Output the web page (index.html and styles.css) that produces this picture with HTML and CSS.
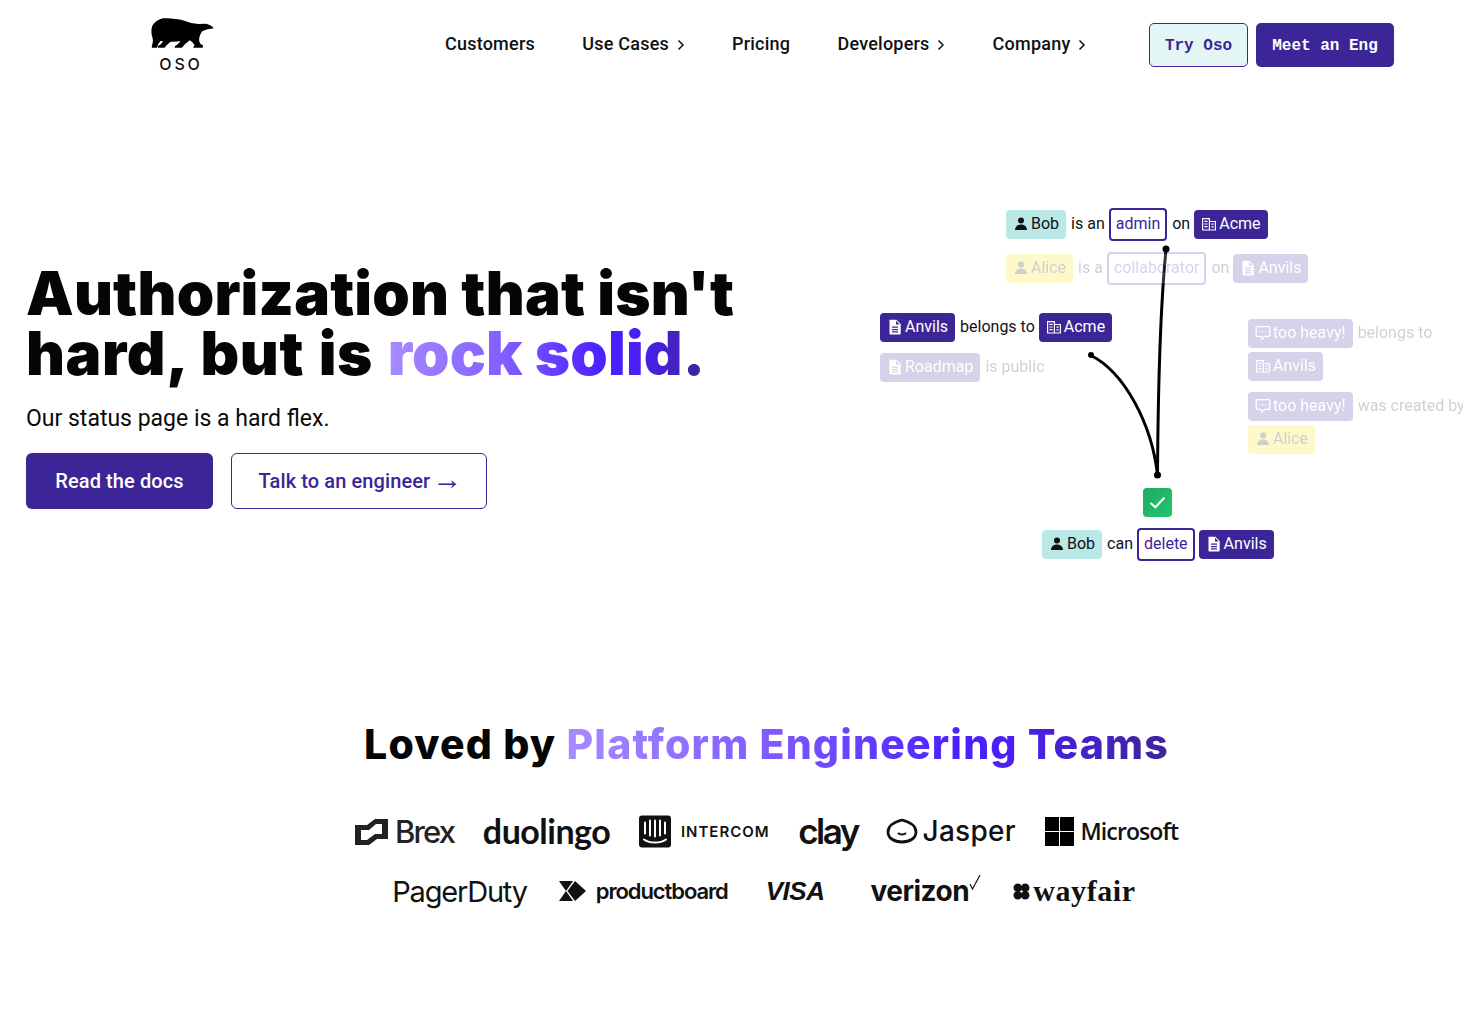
FILE: index.html
```html
<!DOCTYPE html>
<html lang="en">
<head>
<meta charset="utf-8">
<title>Oso</title>
<link rel="stylesheet" href="styles.css">
</head>
<body>
<svg class="defs" width="0" height="0" aria-hidden="true">
  <symbol id="i-user" viewBox="0 0 16 16"><circle cx="8" cy="4.600" r="3"/><path d="M2 14c0-3.400 2.600-5.500 6-5.500s6 2.100 6 5.500z"/></symbol>
  <symbol id="i-doc" viewBox="0 0 16 16"><path fill-rule="evenodd" d="M2.500 0.800h7l4.200 4.200v9.700a.8.8 0 0 1-.8.8H3.300a.8.8 0 0 1-.8-.8zM9 1.800v3.700h3.700zM5 7.500v1.200h6V7.500zM5 10v1.200h6V10zM5 12.300v1.200h6v-1.200z"/></symbol>
  <symbol id="i-org" viewBox="0 0 16 16"><g fill="none" stroke="currentColor" stroke-width="1.200"><path d="M1.600 14V2.600h6.800V14zM8.400 5.500h6V14h-6zM3.400 5.400h3.200M3.400 8h3.200M3.400 10.600h3.200M10.400 8.200h2.200M10.400 10.800h2.200"/></g></symbol>
  <symbol id="i-chat" viewBox="0 0 16 16"><path fill="none" stroke="currentColor" stroke-width="1.300" d="M2.500 1.700h11a1.300 1.300 0 0 1 1.300 1.300v7a1.300 1.300 0 0 1-1.300 1.300H9.500L7 14.300l-1-3H2.500A1.300 1.300 0 0 1 1.200 10V3a1.300 1.300 0 0 1 1.300-1.300z"/><path d="M4.500 6h1.300v1.300H4.500zM7.400 6h1.300v1.300H7.400zM10.200 6h1.300v1.300h-1.300z"/></symbol>
  <symbol id="i-chev" viewBox="0 0 8 12"><path fill="none" stroke="currentColor" stroke-width="1.500" d="M1.500 1.500 6 6l-4.500 4.500"/></symbol>
</svg>

<header class="topbar">
  <a class="brand" href="#">
    <svg class="bear" viewBox="10 13 188 90"><path d="M198 44Q192 35 176 30L152 31Q125 28 100 18 70 12 45 14 22 20 13 38 8 55 14 72 17 85 12 97L12 102 27 102Q30 90 38 82L45 82Q42 92 30 97L30 102 50 102Q58 92 68 84 85 85 98 82 92 92 82 97L80 102 102 102Q112 90 126 80 136 86 140 94L136 102 165 102 165 95Q156 92 154 82 153 65 164 52 178 46 198 44Z"/></svg>
    <span class="brand-name">OSO</span>
  </a>
  <nav class="nav">
    <a class="nav-link" href="#">Customers</a>
    <a class="nav-link" href="#">Use Cases <svg class="chev"><use href="#i-chev"/></svg></a>
    <a class="nav-link" href="#">Pricing</a>
    <a class="nav-link" href="#">Developers <svg class="chev"><use href="#i-chev"/></svg></a>
    <a class="nav-link" href="#">Company <svg class="chev"><use href="#i-chev"/></svg></a>
  </nav>
  <div class="cta">
    <a class="cta-btn cta-light" href="#">Try Oso</a>
    <a class="cta-btn cta-dark" href="#">Meet an Eng</a>
  </div>
</header>

<main>
  <section class="hero">
    <div class="hero-copy">
      <h1 class="hero-title">Authorization that isn't<br><span class="title-line">hard, but is <span class="grad-rock">rock solid.</span></span></h1>
      <p class="hero-sub">Our status page is a hard flex.</p>
      <div class="hero-actions">
        <a class="btn btn-solid" href="#">Read the docs</a>
        <a class="btn btn-outline" href="#">Talk to an engineer <span class="arrow">→</span></a>
      </div>
    </div>
    <div class="diagram">
      <svg class="wires" viewBox="0 0 583 370" fill="none">
        <path class="wire" d="M286 50C280 110 278 200 277.500 275"/>
        <path class="wire" d="M210 155C245 172 272 225 277.500 275"/>
        <circle class="dot" cx="286" cy="49" r="3.500"/>
        <circle class="dot" cx="211" cy="155" r="3"/>
        <circle class="dot" cx="277.500" cy="275" r="3.500"/>
      </svg>

      <div class="group g-a">
        <div class="row"><span class="chip chip-cyan"><svg class="ico"><use href="#i-user"/></svg>Bob</span><span class="word">is an</span><span class="chip chip-line">admin</span><span class="word">on</span><span class="chip chip-dark"><svg class="ico"><use href="#i-org"/></svg>Acme</span></div>
        <div class="row faded"><span class="chip chip-yellow"><svg class="ico"><use href="#i-user"/></svg>Alice</span><span class="word">is a</span><span class="chip chip-line">collaborator</span><span class="word">on</span><span class="chip chip-dark"><svg class="ico"><use href="#i-doc"/></svg>Anvils</span></div>
      </div>

      <div class="group g-b">
        <div class="row"><span class="chip chip-dark"><svg class="ico"><use href="#i-doc"/></svg>Anvils</span><span class="word">belongs to</span><span class="chip chip-dark"><svg class="ico"><use href="#i-org"/></svg>Acme</span></div>
        <div class="row faded"><span class="chip chip-dark"><svg class="ico"><use href="#i-doc"/></svg>Roadmap</span><span class="word">is public</span></div>
      </div>

      <div class="group g-c faded">
        <div class="row"><span class="chip chip-dark"><svg class="ico"><use href="#i-chat"/></svg>too heavy!</span><span class="word">belongs to</span></div>
        <div class="row"><span class="chip chip-dark"><svg class="ico"><use href="#i-org"/></svg>Anvils</span></div>
      </div>
      <div class="group g-d faded">
        <div class="row"><span class="chip chip-dark"><svg class="ico"><use href="#i-chat"/></svg>too heavy!</span><span class="word">was created by</span></div>
        <div class="row"><span class="chip chip-yellow"><svg class="ico"><use href="#i-user"/></svg>Alice</span></div>
      </div>

      <div class="check"><svg viewBox="0 0 16 16" fill="none"><path d="M1.500 8.500 6 12.500 14.500 3.500" stroke="#fff" stroke-width="2"/></svg></div>

      <div class="group g-e">
        <div class="row"><span class="chip chip-cyan"><svg class="ico"><use href="#i-user"/></svg>Bob</span><span class="word">can</span><span class="chip chip-line">delete</span><span class="chip chip-dark"><svg class="ico"><use href="#i-doc"/></svg>Anvils</span></div>
      </div>
    </div>
  </section>

  <section class="loved">
    <h2 class="loved-title">Loved by <span class="grad-teams">Platform Engineering Teams</span></h2>
    <div class="logos logos-1">
      <div class="logo l-brex"><svg class="lg-brex" viewBox="0 0 33 27"><path fill-rule="evenodd" d="M0 7H12L20 1H33V21H22L14 27H0zM6 12V22H12L20 16H27V6H21L14 12z"/></svg><span>Brex</span></div>
      <div class="logo l-duo">duolingo</div>
      <div class="logo l-intercom"><svg class="lg-intercom" viewBox="0 0 32 32"><rect width="32" height="32" rx="3"/><path fill="none" stroke="#fff" stroke-width="2" stroke-linecap="round" d="M6 7v11M11 5v15M16 5v16M21 5v15M26 7v11M5 24c6 4 16 4 22 0"/></svg><span>INTERCOM</span></div>
      <div class="logo l-clay">clay</div>
      <div class="logo l-jasper"><svg class="lg-jasper" viewBox="0 0 32 26" fill="none"><path stroke="#111" stroke-width="2.800" d="M16 2C8 4 2 7 2 14c0 6 6 10 14 10s14-4 14-10C30 7 24 4 16 2z"/><path stroke="#111" stroke-width="2" d="M12 15c2 2 6 2 8 0"/></svg><span>Jasper</span></div>
      <div class="logo l-ms"><span class="ms-grid"><i></i><i></i><i></i><i></i></span><span>Microsoft</span></div>
    </div>
    <div class="logos logos-2">
      <div class="logo l-pd">PagerDuty</div>
      <div class="logo l-pb"><svg class="lg-pb" viewBox="0 0 28 20"><path d="M0 0h14l-7 10zM0 20h14L7 10z"/><path d="M8.500 10 16 0l11 10-11 10z"/></svg><span>productboard</span></div>
      <div class="logo l-visa">VISA</div>
      <div class="logo l-vz">verizon<svg class="lg-check" viewBox="0 0 12 16" fill="none"><path stroke="#111" stroke-width="1.200" d="M1 10l2.500 5L11 1"/></svg></div>
      <div class="logo l-wf"><svg class="lg-wf" viewBox="0 0 16 16"><circle cx="4.500" cy="4.500" r="4"/><circle cx="11.500" cy="4.500" r="4"/><circle cx="4.500" cy="11.500" r="4"/><circle cx="11.500" cy="11.500" r="4"/></svg><span>wayfair</span></div>
    </div>
  </section>
</main>
</body>
</html>
```
FILE: styles.css
```css
* { box-sizing: border-box; }
html, body { margin: 0; padding: 0; }
body { width: 1463px; height: 1029px; overflow: hidden; background: #fff; color: #000; font-family: Roboto, "Liberation Sans", sans-serif; }
a { text-decoration: none; color: inherit; }
.defs { position: absolute; }

.topbar { display: flex; align-items: center; height: 90px; padding: 0 69px 0 151px; }
.brand { display: flex; flex-direction: column; align-items: center; width: 63px; margin-right: 231px; }
.bear { width: 63px; height: 30px; fill: #000; display: block; margin-top: -1px; }
.brand-name { font: 500 16px/1 Inter, sans-serif; letter-spacing: 2.800px; margin-top: 8px; margin-right: 3px; color: #111; }
.nav { display: flex; gap: 47.300px; flex: 1; }
.nav-link { display: flex; align-items: center; font: 500 18px/24px Roboto, sans-serif; letter-spacing: 0.220px; color: #111; white-space: pre; padding-bottom: 2px; }
.chev { width: 8px; height: 12px; margin-left: 3px; margin-top: 2px; }
.cta { display: flex; gap: 8px; }
.cta-btn { display: flex; align-items: center; justify-content: center; height: 44px; border-radius: 5px; font: 700 16px/1 "Liberation Mono", monospace; padding-top: 1px; }
.cta-light { width: 99px; background: #e3f6f5; border: 1px solid #3c2597; color: #3c2597; }
.cta-dark { width: 138px; background: #3c2597; color: #fff; }

.hero { display: flex; height: 540px; }
.hero-copy { width: 854px; padding: 173px 0 0 26px; }
.hero-title { margin: 0; font: 900 60px/60px Inter, sans-serif; letter-spacing: 0.200px; white-space: nowrap; color: #050505; }
.title-line { letter-spacing: 0.650px; word-spacing: 2px; }
.grad-rock { background: linear-gradient(90deg, #a78bff 0%, #8560ff 35%, #4a20ff 68%, #4a20f0 80%, #3c2597 100%); -webkit-background-clip: text; background-clip: text; color: transparent; letter-spacing: 0.200px; word-spacing: 0; }
.hero-sub { margin: 18px 0 0; font: 400 23px/36px Roboto, sans-serif; color: #0a0a0a; }
.hero-actions { display: flex; gap: 18px; margin-top: 16px; }
.btn { display: flex; align-items: center; justify-content: center; height: 56px; border-radius: 6px; font: 500 20px/1 Roboto, sans-serif; letter-spacing: 0.100px; white-space: pre; }
.btn-solid { width: 187px; background: #3c2597; color: #fff; }
.btn-outline { width: 256px; border: 1px solid #3c2597; color: #3c2597; }
.arrow { font: 400 30px/20px "Liberation Sans", sans-serif; margin: 0 -3px 4px -3px; }

.diagram { position: relative; flex: 1; margin-left: 26px; margin-top: 110px; height: 370px; overflow: hidden; }
.wires { position: absolute; left: 0; top: 0; width: 583px; height: 370px; }
.wire { stroke: #000; stroke-width: 3px; }
.dot { fill: #000; }

.group { position: absolute; display: flex; flex-direction: column; }
.g-a { left: 126px; top: 8px; gap: 11px; }
.g-b { left: 0; top: 113px; gap: 11px; }
.g-c { left: 368px; top: 119px; gap: 4px; }
.g-d { left: 368px; top: 192px; gap: 4px; }
.g-e { left: 162px; top: 328px; }
.row { display: flex; align-items: center; gap: 4px; height: 33px; white-space: nowrap; }
.g-b .row, .g-c .row, .g-d .row { height: 29px; }
.faded { opacity: 0.2; }
.chip { display: inline-flex; align-items: center; height: 29px; padding: 0 7px 2px; border-radius: 4px; font: 400 16px/1 Roboto, sans-serif; }
.chip-cyan { background: #b9e8e7; color: #111; }
.chip-yellow { background: #ffdd00; color: #111; }
.chip-dark { background: #3c2597; color: #fff; }
.chip-line { height: 33px; padding: 0 5px 2px; background: #fff; border: 2px solid #3c2597; color: #3c2597; }
.word { font: 400 16px/1 Roboto, sans-serif; color: #111; padding-bottom: 2px; margin-left: 1px; }
.ico { width: 16px; height: 16px; margin-right: 2px; fill: currentColor; color: inherit; }
.check { position: absolute; left: 263px; top: 288px; width: 29px; height: 29px; border-radius: 4px; background: linear-gradient(135deg, #1fa865, #22c76d); display: flex; align-items: center; justify-content: center; }
.check svg { width: 17px; height: 17px; }

.loved { display: flex; flex-direction: column; align-items: center; padding: 84px 0 0 70px; }
.loved-title { margin: 0; font: 800 41px/60px Inter, sans-serif; letter-spacing: 1.170px; color: #050505; white-space: nowrap; }
.grad-teams { background: linear-gradient(90deg, #a78bff 0%, #8560ff 30%, #4a20ff 66%, #4a20f0 75%, #3c2597 100%); -webkit-background-clip: text; background-clip: text; color: transparent; }
.logos { display: flex; align-items: center; justify-content: center; color: #111; white-space: nowrap; }
.logos-1 { gap: 28.600px; margin-top: 27px; height: 60px; }
.logos-2 { gap: 32px; height: 60px; margin-right: 5px; }
.logo { display: flex; align-items: center; }

.lg-brex { width: 33px; height: 27px; margin-right: 7px; fill: #222; }
.l-brex span { font: 500 31px/1 Inter, sans-serif; letter-spacing: -1.800px; color: #222; }
.l-duo { font: 700 34px/1 Lato, sans-serif; letter-spacing: -0.500px; }
.lg-intercom { width: 32px; height: 33px; margin-right: 10px; fill: #111; }
.l-intercom span { font: 600 15px/1 Inter, sans-serif; letter-spacing: 1px; }
.l-clay { font: 600 35px/1 Inter, sans-serif; letter-spacing: -2.500px; }
.lg-jasper { width: 32px; height: 26px; margin-right: 4px; }
.l-jasper span { font: 500 28px/1 Inter, sans-serif; letter-spacing: 0.300px; }
.ms-grid { display: grid; grid-template-columns: 14px 14px; grid-auto-rows: 14px; gap: 1px; margin-right: 7px; }
.ms-grid i { background: #000; }
.l-ms span { font: 600 23px/1 "Open Sans", sans-serif; letter-spacing: -0.900px; }
.l-pd { font: 400 29px/1 Inter, sans-serif; letter-spacing: -1.200px; }
.lg-pb { width: 28px; height: 20px; margin-right: 9px; fill: #111; }
.l-pb span { font: 600 22px/1 Inter, sans-serif; letter-spacing: -1.100px; }
.l-visa { font: italic 700 26px/1 "Liberation Sans", sans-serif; letter-spacing: -0.500px; margin: 0 14px 0 6px; }
.l-vz { font: 700 28px/1 Inter, sans-serif; letter-spacing: -0.500px; }
.lg-check { width: 12px; height: 16px; margin-top: -18px; }
.lg-wf { width: 17px; height: 17px; margin-right: 3px; fill: #111; }
.l-wf span { font: 700 30px/1 "Liberation Serif", serif; letter-spacing: 0.600px; }
```
